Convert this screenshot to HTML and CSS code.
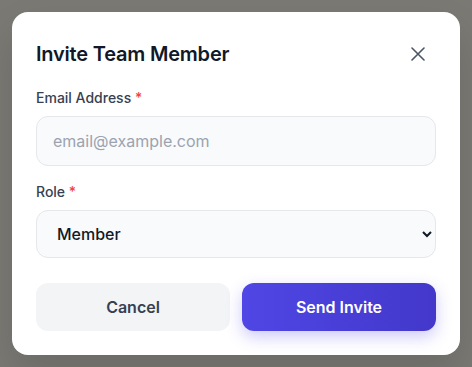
FILE: index.html
```html
<!DOCTYPE html>
<html lang="en">
<head>
  <meta charset="UTF-8">
  <meta name="viewport" content="width=device-width, initial-scale=1.0">
  <title>Invite Team Member</title>
  <link rel="stylesheet" href="styles.css">
</head>
<body>
  <div class="overlay">
    <div class="modal">
      <div class="modal-head">
        <h2 class="modal-title">Invite Team Member</h2>
        <button class="close-bt" type="button" aria-label="Close">
          <svg width="14" height="14" viewBox="0 0 14 14" fill="none" stroke="#4b5563" stroke-width="1.6" stroke-linecap="round">
            <path d="M1 1 L13 13 M13 1 L1 13"/>
          </svg>
        </button>
      </div>

      <div class="field">
        <label class="field-label" for="email">Email Address <span class="req">*</span></label>
        <input class="field-input" id="email" type="email" placeholder="email@example.com">
      </div>

      <div class="field field-last">
        <label class="field-label" for="role">Role <span class="req">*</span></label>
        <select class="field-input field-select" id="role">
          <option>Member</option>
          <option>Admin</option>
          <option>Viewer</option>
        </select>
      </div>

      <div class="actions">
        <button class="bt bt-cancel" type="button">Cancel</button>
        <button class="bt bt-send" type="button">Send Invite</button>
      </div>
    </div>
  </div>
</body>
</html>
```

FILE: styles.css
```css
*{
  box-sizing: border-box;
}
html, body{
  margin: 0; height: 100%;
}
body{
  font-family: Inter, "Noto Sans", sans-serif;
  background-color: #7a7974;
}
.overlay{
  display: flex; align-items: center; justify-content: center;
  height: 100%;
}
.modal{
  width: 448px; padding: 24px;
  background-color: #ffffff; border-radius: 16px;
  box-shadow: 0 20px 40px rgba(0, 0, 0, 0.12);
}
.modal-head{
  display: flex; align-items: center; justify-content: space-between;
  height: 36px; margin-bottom: 16px;
}
.modal-title{
  margin: 0; font-size: 20px; font-weight: 600; color: #111827;
  letter-spacing: -0.2px;
}
.close-bt{
  display: flex; align-items: center; justify-content: center;
  width: 36px; height: 36px; padding: 0;
  border: none; background: none; cursor: pointer;
}
.field{
  margin-bottom: 16px;
}
.field-last{
  margin-bottom: 25px;
}
.field-label{
  display: block; margin-bottom: 8px;
  font-size: 14px; line-height: 20px; font-weight: 500; color: #374151;
}
.req{
  color: #ef4444;
}
.field-input{
  display: block; width: 100%; height: 50px; padding: 0 16px;
  font-family: inherit; font-size: 16px; color: #111827;
  background-color: #f8fafc; border: 1px solid #e5e7eb; border-radius: 12px;
  outline: none;
}
.field-input::placeholder{
  color: #9ca3af;
}
.field-select{
  height: 48px; font-weight: 500;
}
.actions{
  display: flex; gap: 12px;
}
.bt{
  flex: 1; height: 48px;
  font-family: inherit; font-size: 16px; font-weight: 600;
  border: none; border-radius: 12px; cursor: pointer;
}
.bt-cancel{
  color: #374151; background-color: #f3f4f6;
}
.bt-send{
  color: #ffffff;
  background: linear-gradient(90deg, #4f46e5, #4338ca);
  box-shadow: 0 6px 16px rgba(79, 70, 229, 0.28);
}
```
